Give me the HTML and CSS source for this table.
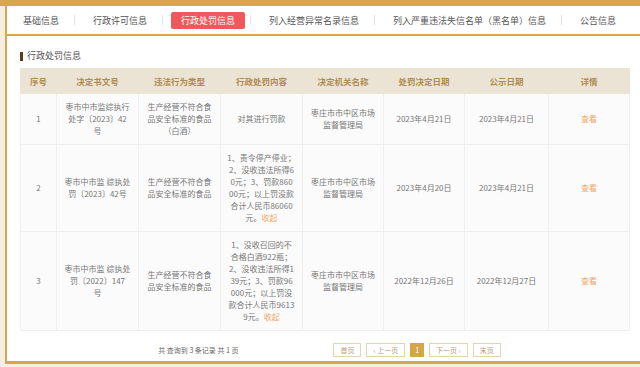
FILE: index.html
```html
<!DOCTYPE html>
<html lang="zh-CN">
<head>
<meta charset="utf-8">
<title>行政处罚信息</title>
<link rel="stylesheet" href="styles.css">
</head>
<body>
<div class="frame">
  <nav class="tabs">
    <span class="tab">基础信息</span><span class="sep"></span>
    <span class="tab">行政许可信息</span><span class="sep"></span>
    <span class="tab active">行政处罚信息</span><span class="sep"></span>
    <span class="tab">列入经营异常名录信息</span><span class="sep"></span>
    <span class="tab">列入严重违法失信名单（黑名单）信息</span><span class="sep"></span>
    <span class="tab">公告信息</span>
  </nav>
  <main class="content">
    <h2 class="title">行政处罚信息</h2>
    <table class="grid">
      <colgroup>
        <col class="c-no"><col class="c-doc"><col class="c-type"><col class="c-act">
        <col class="c-org"><col class="c-date"><col class="c-pub"><col class="c-more">
      </colgroup>
      <thead>
        <tr>
          <th>序号</th><th>决定书文号</th><th>违法行为类型</th><th>行政处罚内容</th>
          <th>决定机关名称</th><th>处罚决定日期</th><th>公示日期</th><th>详情</th>
        </tr>
      </thead>
      <tbody>
        <tr>
          <td>1</td>
          <td>枣市中市监综执行<br>处字〔2023〕42<br>号</td>
          <td>生产经营不符合食<br>品安全标准的食品<br>（白酒）</td>
          <td>对其进行罚款</td>
          <td>枣庄市市中区市场<br>监督管理局</td>
          <td>2023年4月21日</td>
          <td>2023年4月21日</td>
          <td><span class="link">查看</span></td>
        </tr>
        <tr>
          <td>2</td>
          <td>枣市中市监 综执处<br>罚〔2023〕42号</td>
          <td>生产经营不符合食<br>品安全标准的食品</td>
          <td>1、责令停产停业；<br>2、没收违法所得6<br>0元；3、罚款860<br>00元；以上罚没款<br>合计人民币86060<br>元。<span class="link">收起</span></td>
          <td>枣庄市市中区市场<br>监督管理局</td>
          <td>2023年4月20日</td>
          <td>2023年4月21日</td>
          <td><span class="link">查看</span></td>
        </tr>
        <tr>
          <td>3</td>
          <td>枣市中市监 综执处<br>罚〔2022〕147<br>号</td>
          <td>生产经营不符合食<br>品安全标准的食品</td>
          <td>1、没收召回的不<br>合格白酒922瓶；<br>2、没收违法所得1<br>39元；3、罚款96<br>000元；以上罚没<br>款合计人民币9613<br>9元。<span class="link">收起</span></td>
          <td>枣庄市市中区市场<br>监督管理局</td>
          <td>2022年12月26日</td>
          <td>2022年12月27日</td>
          <td><span class="link">查看</span></td>
        </tr>
      </tbody>
    </table>
    <div class="footer">
      <span class="count">共 查询到 3 条记录 共 1 页</span>
      <div class="pager">
        <span class="pg">首页</span>
        <span class="pg">‹ 上一页</span>
        <span class="pg current">1</span>
        <span class="pg">下一页 ›</span>
        <span class="pg">末页</span>
      </div>
    </div>
  </main>
</div>
</body>
</html>
```

FILE: styles.css
```css
* { box-sizing: border-box; }
html, body { margin: 0; padding: 0; }
body {
  width: 640px;
  height: 367px;
  overflow: hidden;
  background: #f7efdd;
  border-top: 6px solid #d5a84c;
  font-family: "Noto Sans CJK SC", "Noto Sans", sans-serif;
  color: #666;
}
.frame {
  margin-left: 5px;
  height: 358px;
  border-left: 2px solid #d5a84c;
  border-bottom: 3px solid #d5a84c;
  background: #fff;
  display: flex;
  flex-direction: column;
}
.tabs {
  height: 30px;
  flex: none;
  border-bottom: 2px solid #d5a84c;
  display: flex;
  align-items: center;
  padding-left: 6px;
  white-space: nowrap;
}
.tab {
  font-size: 9px;
  line-height: 17px;
  padding: 0 10px;
  color: #555;
}
.tab.active {
  background: #f0585b;
  color: #fff;
  border-radius: 2px;
}
.sep {
  width: 1px;
  height: 10px;
  background: #e2e2e2;
  margin: 0 8px 0 5px;
}
.content {
  padding: 14px 11px 0 13px;
}
.title {
  margin: 0;
  font-size: 9px;
  font-weight: normal;
  line-height: 12px;
  color: #555;
  display: flex;
  align-items: center;
}
.title::before {
  content: "";
  width: 3px;
  height: 9px;
  background: #5c3d20;
  margin-right: 4px;
}
.grid {
  margin-top: 6px;
  width: 609px;
  table-layout: fixed;
  border-collapse: collapse;
}
.c-no { width: 36px; }
.c-doc, .c-type, .c-act { width: 82px; }
.c-org, .c-date, .c-more { width: 81px; }
.c-pub { width: 84px; }
.grid th {
  height: 25px;
  padding: 0 4px;
  background: #ebe3d3;
  color: #b08b50;
  font-size: 8.5px;
  font-weight: bold;
  border: 1px solid #ebe3d3;
}
.grid td {
  padding: 7px 6px;
  font-size: 8px;
  line-height: 12px;
  text-align: center;
  vertical-align: middle;
  color: #777;
  background: #fbfbfb;
  border: 1px solid #efefef;
}
.link { color: #f3a865; }
.footer {
  margin-top: 12px;
  display: flex;
  align-items: center;
  justify-content: center;
  gap: 95px;
  padding-left: 10px;
}
.count {
  font-size: 7px;
  color: #666;
}
.pager {
  display: flex;
  gap: 5px;
}
.pg {
  height: 14px;
  line-height: 12px;
  padding: 0 6px;
  border: 1px solid #e3d3b4;
  font-size: 7px;
  color: #b9a07c;
  background: #fff;
}
.pg.current {
  background: #d3a64a;
  border-color: #d3a64a;
  color: #fff;
  padding: 0 4px;
}
```
